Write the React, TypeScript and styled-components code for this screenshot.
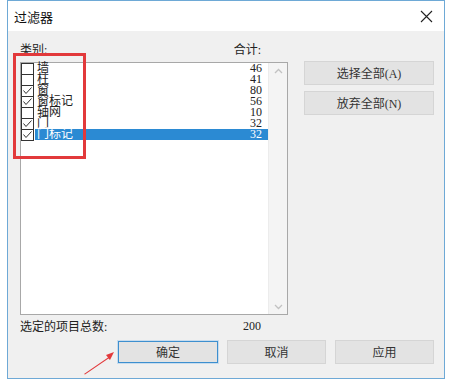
import React from 'react';
import styled, {createGlobalStyle} from 'styled-components';

const GlobalStyle = createGlobalStyle`
  html, body {
    margin: 0;
    padding: 0;
    background: #ffffff;
  }
  body {
    font-family: "Liberation Serif", "Noto Sans CJK SC", serif;
    font-size: 12px;
    color: #1a1a1a;
  }
`

const Page = styled.div`
  position: relative;
  width: 451px;
  height: 386px;
  overflow: hidden;
`

const Dialog = styled.div`
  margin-left: 7px;
  width: 438px;
  height: 379px;
  box-sizing: border-box;
  border: 1px solid #6ea9d6;
  display: flex;
  flex-direction: column;
  background: #f0f0f0;
`

const TitleBar = styled.div`
  height: 30px;
  flex-shrink: 0;
  background: #ffffff;
  display: flex;
  align-items: center;
  justify-content: space-between;
  padding: 0 11px 0 6px;
  font-family: "Noto Sans CJK SC", sans-serif;
  font-size: 13px;
  color: #111;
`

const Close = styled.div`
  width: 14px;
  height: 14px;
  display: flex;
  align-items: center;
  justify-content: center;
`

const Body = styled.div`
  flex: 1;
  display: flex;
  flex-direction: column;
  padding: 9px 10px 14px 12px;
`

const Main = styled.div`
  display: flex;
  gap: 16px;
`

const LeftCol = styled.div`
  width: 268px;
  display: flex;
  flex-direction: column;
`

const LabelRow = styled.div<{ height: number }>`
  height: ${p => p.height}px;
  display: flex;
  align-items: center;
  justify-content: space-between;
  padding-right: 27px;
  color: #222;
`

const ListBox = styled.div`
  margin-top: 4px;
  height: 253px;
  box-sizing: border-box;
  border: 1px solid #a8a8a8;
  background: #ffffff;
  display: flex;
`

const Rows = styled.div`
  flex: 1;
  display: flex;
  flex-direction: column;
`

const Row = styled.div`
  height: 11px;
  display: flex;
  align-items: flex-start;
`

const Box = styled.div`
  width: 13px;
  height: 12px;
  box-sizing: border-box;
  border: 1px solid #333;
  background: #fff;
  flex-shrink: 0;
  position: relative;
  z-index: 1;

  svg {
    display: block;
  }
`

const ItemLabel = styled.div<{ selected?: boolean }>`
  flex: 1;
  height: 11px;
  margin-left: 1px;
  padding: 0 6px 0 2px;
  display: flex;
  align-items: center;
  justify-content: space-between;
  line-height: 11px;
  font-size: 12px;
  background: ${p => p.selected ? '#2b8ad3' : 'transparent'};
  color: ${p => p.selected ? '#ffffff' : '#222'};
`

const ScrollBar = styled.div`
  width: 18px;
  background: #f4f4f4;
  border-left: 1px solid #ececec;
  display: flex;
  flex-direction: column;
  justify-content: space-between;
  align-items: center;
  padding: 5px 0 4px;
`

const RightCol = styled.div`
  width: 130px;
  display: flex;
  flex-direction: column;
  gap: 6px;
  padding-top: 21px;
`

const Button = styled.button<{ focused?: boolean; width?: number }>`
  width: ${p => p.width ?? 130}px;
  height: ${p => p.focused ? 22 : 24}px;
  box-sizing: border-box;
  background: #e3e3e3;
  border: 1px solid ${p => p.focused ? '#3d8fcf' : '#d5d5d5'};
  outline: ${p => p.focused ? '1px solid #c7dcee' : 'none'};
  font-family: "Liberation Serif", "Noto Sans CJK SC", serif;
  font-size: 12px;
  color: #333;
  padding: 0;
  margin: 0;
`

const Footer = styled.div`
  margin-top: 3px;
  display: flex;
  justify-content: flex-end;
  align-items: center;
  gap: 9px;
  padding-right: 0;
`

const RedFrame = styled.div`
  position: absolute;
  left: 13px;
  top: 53px;
  width: 73px;
  height: 106px;
  box-sizing: border-box;
  border: 3px solid #e2393b;
  pointer-events: none;
  z-index: 5;
`

const Arrow = styled.svg`
  position: absolute;
  left: 80px;
  top: 345px;
  z-index: 5;
`

const items = [
    {name: '墙', count: 46, checked: false},
    {name: '柱', count: 41, checked: false},
    {name: '窗', count: 80, checked: true},
    {name: '窗标记', count: 56, checked: true},
    {name: '轴网', count: 10, checked: false},
    {name: '门', count: 32, checked: true},
    {name: '门标记', count: 32, checked: true, selected: true},
];

const Chevron = ({up}: { up?: boolean }) => (
    <svg width="9" height="6" viewBox="0 0 9 6">
        <polyline points={up ? '1,5 4.5,1.5 8,5' : '1,1 4.5,4.5 8,1'}
                  fill="none" stroke="#c2c2c2" strokeWidth="1.3"/>
    </svg>
);

const App: React.FC = () => {
    return (
        <Page>
            <GlobalStyle/>
            <Dialog>
                <TitleBar>
                    <span>过滤器</span>
                    <Close>
                        <svg width="13" height="13" viewBox="0 0 13 13">
                            <path d="M1 1 L12 12 M12 1 L1 12" stroke="#222" strokeWidth="1.1"/>
                        </svg>
                    </Close>
                </TitleBar>
                <Body>
                    <Main>
                        <LeftCol>
                            <LabelRow height={18}>
                                <span>类别:</span>
                                <span>合计:</span>
                            </LabelRow>
                            <ListBox>
                                <Rows>
                                    {items.map((item, index) => (
                                        <Row key={index}>
                                            <Box>
                                                {item.checked &&
                                                    <svg width="11" height="10" viewBox="0 0 11 10">
                                                        <polyline points="1.5,4.5 4,7.5 9.5,1.5" fill="none"
                                                                  stroke="#333" strokeWidth="1"/>
                                                    </svg>}
                                            </Box>
                                            <ItemLabel selected={item.selected}>
                                                <span>{item.name}</span>
                                                <span>{item.count}</span>
                                            </ItemLabel>
                                        </Row>
                                    ))}
                                </Rows>
                                <ScrollBar>
                                    <Chevron up/>
                                    <Chevron/>
                                </ScrollBar>
                            </ListBox>
                            <LabelRow height={22}>
                                <span>选定的项目总数:</span>
                                <span>200</span>
                            </LabelRow>
                        </LeftCol>
                        <RightCol>
                            <Button>选择全部(A)</Button>
                            <Button>放弃全部(N)</Button>
                        </RightCol>
                    </Main>
                    <Footer>
                        <Button width={100} focused>确定</Button>
                        <Button width={99}>取消</Button>
                        <Button width={99}>应用</Button>
                    </Footer>
                </Body>
            </Dialog>
            <RedFrame/>
            <Arrow width="40" height="35" viewBox="0 0 40 35">
                <polygon points="4,29 28,12.5 26,10 34,7 30,15 28.5,13.5 5,29.5" fill="#e2393b"/>
            </Arrow>
        </Page>
    );
};

export default App;
